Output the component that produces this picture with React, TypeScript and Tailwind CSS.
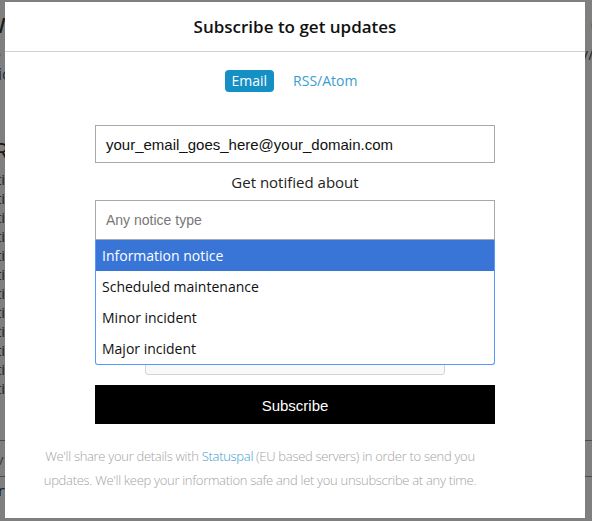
import { useState } from "react";

const options = [
  "Information notice",
  "Scheduled maintenance",
  "Minor incident",
  "Major incident",
];

export default function App() {
  const [tab, setTab] = useState("email");
  const [active] = useState(0);

  return (
    <div className="relative w-[592px] h-[521px] overflow-hidden bg-white font-['Open_Sans',sans-serif]">
      {/* Page behind the modal */}
      <div className="text-[#333] -ml-[2px]">
        <div className="flex justify-between h-[44px] items-center text-[28px]">
          <span className="-ml-[14px]">w</span>
          <span className="-mr-[14px]">e</span>
        </div>
        <div className="flex justify-between text-[16px] leading-[20px] text-[#555]">
          <span className="-ml-[6px]">e</span>
          <span className="-mr-[2px]">y/</span>
        </div>
        <div className="text-[16px] leading-[20px] text-[#555]">ic</div>
        <div className="mt-[52px] text-[24px] leading-[30px] -ml-[4px]">R</div>
        <div className="mt-[4px] text-[15px] leading-[19px] text-[#444]">
          {Array.from({ length: 12 }).map((_, i) => (
            <div key={i} className="-ml-[2px]">tion</div>
          ))}
        </div>
        <div className="mt-[42px] border-t border-[#999] h-[36px] text-[#777] text-[15px] leading-[36px] -ml-[2px]">
          v
        </div>
        <div className="border-t border-[#999] text-[15px] leading-[26px] text-[#333]">
          rvices
        </div>
      </div>

      {/* Overlay */}
      <div className="absolute inset-0 bg-black/50" />

      {/* Modal */}
      <div className="absolute left-[5px] top-[2px] w-[580px] h-[516px] bg-white">
        <header className="h-[50px] border-b border-[#d0d0d0] flex items-center justify-center">
          <h1 className="text-[17px] font-semibold text-[#111]">Subscribe to get updates</h1>
        </header>

        <div className="flex justify-center items-center gap-[11px] mt-[18px]">
          <button
            onClick={() => setTab("email")}
            className={`h-[22px] px-[7px] rounded-[4px] text-[14px] leading-[22px] ${
              tab === "email" ? "bg-[#1590c5] text-white" : "text-[#3a9dd0]"
            }`}
          >
            Email
          </button>
          <button
            onClick={() => setTab("rss")}
            className={`h-[22px] px-[8px] rounded-[4px] text-[14px] leading-[22px] ${
              tab === "rss" ? "bg-[#1590c5] text-white" : "text-[#3a9dd0]"
            }`}
          >
            RSS/Atom
          </button>
        </div>

        <form className="w-[400px] mx-auto mt-[33px]" onSubmit={(e) => e.preventDefault()}>
          <input
            type="email"
            defaultValue="your_email_goes_here@your_domain.com"
            className="block w-full h-[38px] border border-[#a9a9a9] px-[10px] text-[15px] text-[#111] font-['Liberation_Sans',Arial,sans-serif] outline-none"
          />
          <p className="text-center text-[15px] text-[#222] mt-[7px] leading-[24px]">
            Get notified about
          </p>

          <div className="relative mt-[6px]">
            <div className="h-[40px] border border-[#a9a9a9] flex items-center px-[10px] text-[14px] text-[#777] font-['Liberation_Sans',Arial,sans-serif]">
              Any notice type
            </div>
            <ul className="absolute left-0 right-0 top-[40px] z-10 bg-white border border-[#5897fb] border-t-0 rounded-b-[3px]">
              {options.map((o, i) => (
                <li
                  key={o}
                  className={`h-[31px] px-[6px] flex items-center text-[14px] ${
                    i === active ? "bg-[#3875d7] text-white" : "text-[#111]"
                  }`}
                >
                  {o}
                </li>
              ))}
            </ul>

            <div className="mx-auto mt-[60px] w-[300px] h-[75px] border border-[#d3d3d3] rounded-[3px] bg-[#f9f9f9]" />
          </div>

          <button
            type="submit"
            className="block w-full h-[39px] mt-[10px] bg-black text-white text-[15px] leading-[41px] font-['Liberation_Sans',Arial,sans-serif]"
          >
            Subscribe
          </button>
        </form>

        <p className="w-[480px] ml-[15px] mt-[20px] text-center text-[13px] tracking-[-0.3px] leading-[24px] font-light text-[#a3a3a3]">
          We'll share your details with{" "}
          <a className="text-[#3a9dd0]">Statuspal</a> (EU based servers) in order to send you
          updates. We'll keep your information safe and let you unsubscribe at any time.
        </p>
      </div>
    </div>
  );
}
